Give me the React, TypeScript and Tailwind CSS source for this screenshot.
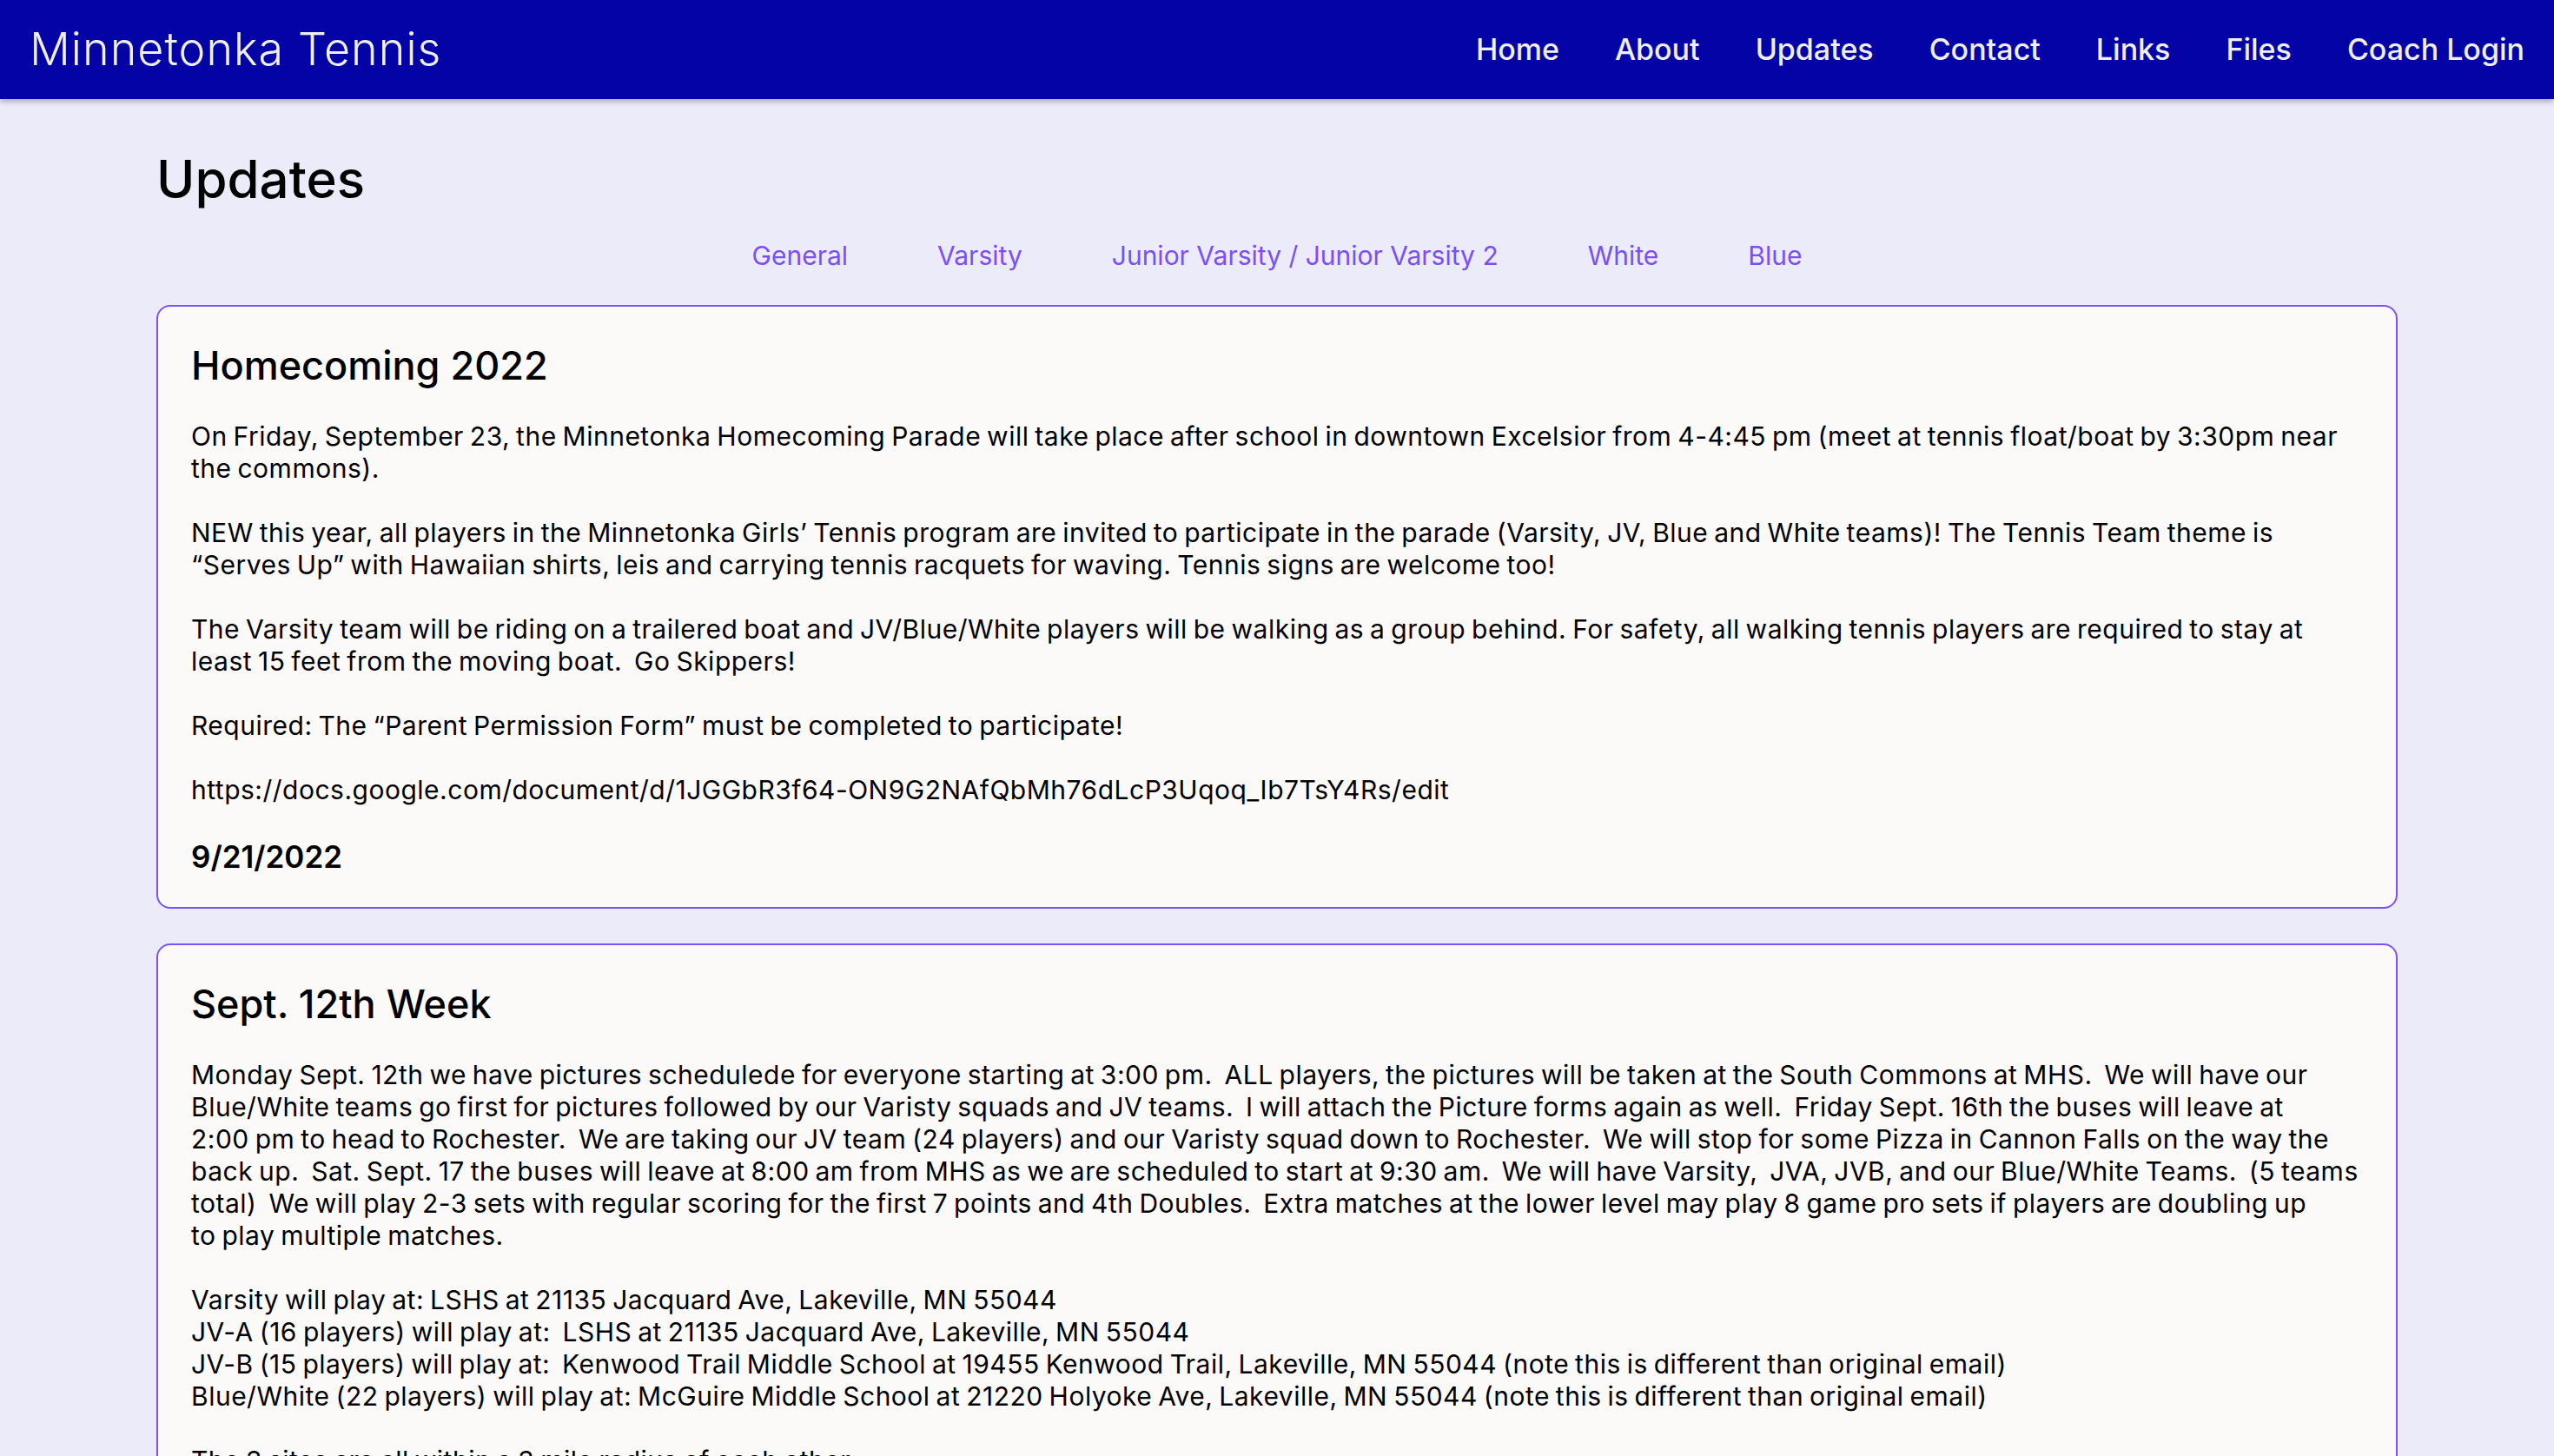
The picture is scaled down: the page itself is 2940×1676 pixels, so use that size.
import React from "react";

type Update = {
  id: number;
  title: string;
  paragraphs: string[][];
  date?: string;
};

const navLinks = ["Home", "About", "Updates", "Contact", "Links", "Files", "Coach Login"];

const tabs = ["General", "Varsity", "Junior Varsity / Junior Varsity 2", "White", "Blue"];

const updates: Update[] = [
  {
    id: 1,
    title: "Homecoming 2022",
    paragraphs: [
      [
        "On Friday, September 23, the Minnetonka Homecoming Parade will take place after school in downtown Excelsior from 4-4:45 pm (meet at tennis float/boat by 3:30pm near",
        "the commons).",
      ],
      [
        "NEW this year, all players in the Minnetonka Girls\u2019 Tennis program are invited to participate in the parade (Varsity, JV, Blue and White teams)! The Tennis Team theme is",
        "\u201cServes Up\u201d with Hawaiian shirts, leis and carrying tennis racquets for waving. Tennis signs are welcome too!",
      ],
      [
        "The Varsity team will be riding on a trailered boat and JV/Blue/White players will be walking as a group behind. For safety, all walking tennis players are required to stay at",
        "least 15 feet from the moving boat.  Go Skippers!",
      ],
      ["Required: The \u201cParent Permission Form\u201d must be completed to participate!"],
      ["https://docs.google.com/document/d/1JGGbR3f64-ON9G2NAfQbMh76dLcP3Uqoq_Ib7TsY4Rs/edit"],
    ],
    date: "9/21/2022",
  },
  {
    id: 2,
    title: "Sept. 12th Week",
    paragraphs: [
      [
        "Monday Sept. 12th we have pictures schedulede for everyone starting at 3:00 pm.  ALL players, the pictures will be taken at the South Commons at MHS.  We will have our",
        "Blue/White teams go first for pictures followed by our Varisty squads and JV teams.  I will attach the Picture forms again as well.  Friday Sept. 16th the buses will leave at",
        "2:00 pm to head to Rochester.  We are taking our JV team (24 players) and our Varisty squad down to Rochester.  We will stop for some Pizza in Cannon Falls on the way the",
        "back up.  Sat. Sept. 17 the buses will leave at 8:00 am from MHS as we are scheduled to start at 9:30 am.  We will have Varsity,  JVA, JVB, and our Blue/White Teams.  (5 teams",
        "total)  We will play 2-3 sets with regular scoring for the first 7 points and 4th Doubles.  Extra matches at the lower level may play 8 game pro sets if players are doubling up",
        "to play multiple matches.",
      ],
      [
        "Varsity will play at: LSHS at 21135 Jacquard Ave, Lakeville, MN 55044",
        "JV-A (16 players) will play at:  LSHS at 21135 Jacquard Ave, Lakeville, MN 55044",
        "JV-B (15 players) will play at:  Kenwood Trail Middle School at 19455 Kenwood Trail, Lakeville, MN 55044 (note this is different than original email)",
        "Blue/White (22 players) will play at: McGuire Middle School at 21220 Holyoke Ave, Lakeville, MN 55044 (note this is different than original email)",
      ],
      ["The 3 sites are all within a 3 mile radius of each other."],
    ],
  },
];

function UpdateCard({ item }: { item: Update }) {
  return (
    <div className="rounded-[16px] border-2 border-[#7b52f5] bg-[#fcf9f9] px-[38px] pt-[40px] pb-[36px]">
      <h2 className="text-[45px] leading-[56px] font-medium text-black">{item.title}</h2>

      <div className="mt-[35px] space-y-[37px] text-[30px] leading-[37px] tracking-[0.5px] [word-spacing:-2px] text-black">
        {item.paragraphs.map((lines, i) => (
          <p key={i}>
            {lines.map((line, j) => (
              <span key={j} className="block whitespace-pre">
                {line}
              </span>
            ))}
          </p>
        ))}
      </div>

      {item.date && (
        <p className="mt-[36px] text-[35px] leading-[44px] font-semibold text-black">{item.date}</p>
      )}
    </div>
  );
}

export default function App() {
  return (
    <div className="min-h-screen bg-[#ebebfa] font-[Inter,'Noto_Sans',sans-serif]">
      {/* NAVBAR */}
      <header className="h-[114px] bg-[#0404a6] flex items-center justify-between pl-[34px] pr-[34px] shadow-[0_3px_6px_rgba(0,0,0,0.28)] relative">
        <span className="text-[52px] font-light tracking-[0.02em] text-[#eeeeee]">Minnetonka Tennis</span>

        <nav className="flex items-center gap-[64px] -mt-[2px]">
          {navLinks.map((link) => (
            <a key={link} href="#" className="text-[34px] font-medium text-[#eeeeee]">
              {link}
            </a>
          ))}
        </nav>
      </header>

      {/* CONTENT */}
      <main className="mx-[180px] pt-[56px]">
        <h1 className="text-[60px] leading-[72px] font-medium text-black">Updates</h1>

        <div className="mt-[34px] flex justify-center gap-[103px]">
          {tabs.map((tab) => (
            <a key={tab} href="#" className="text-[30px] leading-[37px] text-[#7b4ff2]">
              {tab}
            </a>
          ))}
        </div>

        <div className="mt-[38px] space-y-[40px] pb-[60px]">
          {updates.map((item) => (
            <UpdateCard key={item.id} item={item} />
          ))}
        </div>
      </main>
    </div>
  );
}
